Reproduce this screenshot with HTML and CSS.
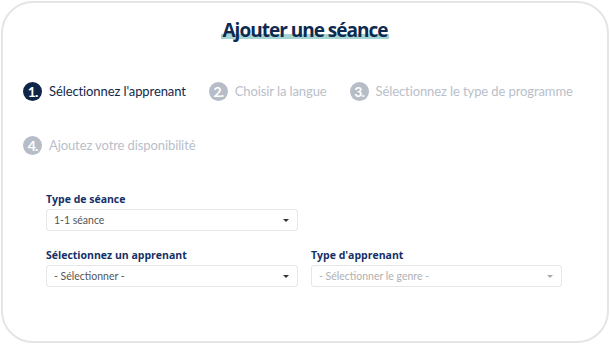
FILE: index.html
```html
<!DOCTYPE html>
<html lang="fr">
<head>
<meta charset="utf-8">
<link rel="stylesheet" href="styles.css">
</head>
<body>
<div class="card">
  <h1 class="title"><span class="title-text">Ajouter une séance</span></h1>
  <ol class="steps">
    <li class="step active"><span class="num">1.</span><span class="label">Sélectionnez l'apprenant</span></li>
    <li class="step"><span class="num">2.</span><span class="label">Choisir la langue</span></li>
    <li class="step"><span class="num">3.</span><span class="label">Sélectionnez le type de programme</span></li>
    <li class="step"><span class="num">4.</span><span class="label">Ajoutez votre disponibilité</span></li>
  </ol>
  <form class="form">
    <div class="field">
      <label class="flabel">Type de séance</label>
      <div class="select"><span>1-1 séance</span><i class="caret"></i></div>
    </div>
    <div class="field empty"></div>
    <div class="field">
      <label class="flabel">Sélectionnez un apprenant</label>
      <div class="select"><span>- Sélectionner -</span><i class="caret"></i></div>
    </div>
    <div class="field">
      <label class="flabel">Type d'apprenant</label>
      <div class="select disabled"><span>- Sélectionner le genre -</span><i class="caret"></i></div>
    </div>
  </form>
</div>
</body>
</html>
```
FILE: styles.css
```css
* { box-sizing: border-box; }
html, body { margin: 0; padding: 0; background: #ffffff; }
body { width: 610px; height: 344px; font-family: "Lato", "Open Sans", sans-serif; }
.card {
  margin: 1px 1px 0 1px;
  height: 342px;
  border: 2px solid #e5e5e5;
  border-radius: 32px;
  background: #fff;
  padding: 14px 20px 0 20px;
}
.title {
  margin: 0;
  text-align: center;
  font-family: "Open Sans", sans-serif;
  font-size: 19px;
  font-weight: 700;
  color: #0e2a50;
  letter-spacing: -1px;
  line-height: 26px;
}
.title-text {
  background: linear-gradient(to bottom, transparent 66%, #a5d4d4 66%, #a5d4d4 84%, transparent 84%);
  padding: 0 2px;
}
.steps {
  list-style: none;
  margin: 38px 0 0 0;
  padding: 0;
  display: flex;
  flex-wrap: wrap;
  column-gap: 23px;
  row-gap: 34px;
}
.step {
  display: flex;
  align-items: center;
  gap: 7px;
  color: #b9c0ca;
  font-size: 13px;
  letter-spacing: -0.1px;
  height: 20px;
}
.step .num {
  width: 19px;
  height: 19px;
  border-radius: 50%;
  background: #b6bdc7;
  color: #fff;
  font-weight: 700;
  font-size: 14px;
  line-height: 19px;
  text-align: center;
  letter-spacing: -1px;
  flex: none;
}
.step.active { color: #13294b; }
.step.active .num { background: #0f2548; }
.form {
  margin: 37px 0 0 23px;
  width: 516px;
  display: grid;
  grid-template-columns: 252px 251px;
  column-gap: 13px;
  row-gap: 17px;
  font-family: "Open Sans", sans-serif;
}
.flabel {
  display: block;
  font-size: 10.5px;
  font-weight: 700;
  color: #142f66;
  line-height: 14px;
  margin-bottom: 3px;
}
.select {
  height: 22px;
  border: 1px solid #e6e6e6;
  border-radius: 3px;
  display: flex;
  align-items: center;
  justify-content: space-between;
  padding: 0 8px 0 7px;
  font-family: "Lato", sans-serif;
  font-size: 10.5px;
  color: #555;
}
.select.disabled { color: #b0b0b0; }
.caret {
  width: 0; height: 0;
  border-left: 3px solid transparent;
  border-right: 3px solid transparent;
  border-top: 3px solid #333;
}
.select.disabled .caret { border-top-color: #aaa; }
```
